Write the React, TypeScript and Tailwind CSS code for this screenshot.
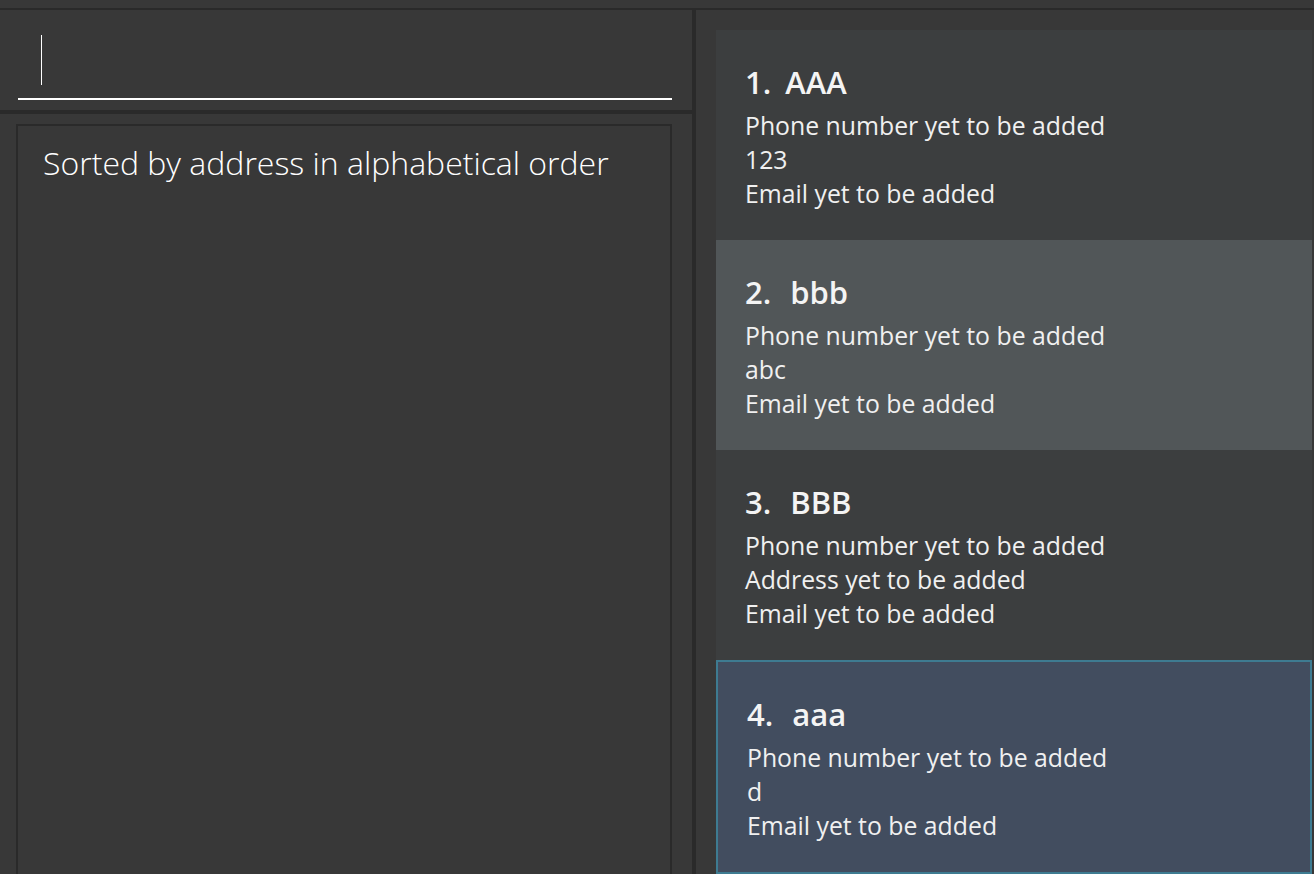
import React from "react";

type Person = { id: number; name: string; lines: string[]; bg: string; selected?: boolean };

const people: Person[] = [
  { id: 1, name: "AAA", lines: ["Phone number yet to be added", "123", "Email yet to be added"], bg: "bg-[#3c3e3f]" },
  { id: 2, name: "bbb", lines: ["Phone number yet to be added", "abc", "Email yet to be added"], bg: "bg-[#515658]" },
  { id: 3, name: "BBB", lines: ["Phone number yet to be added", "Address yet to be added", "Email yet to be added"], bg: "bg-[#3c3e3f]" },
  { id: 4, name: "aaa", lines: ["Phone number yet to be added", "d", "Email yet to be added"], bg: "bg-[#424d5f]", selected: true },
];

function Card({ p }: { p: Person }) {
  return (
    <div
      className={`shrink-0 ${p.bg} pl-[29px] pt-[33px] ${
        p.selected ? "h-[214px] border-2 border-[#3e7b91]" : "h-[210px]"
      }`}
    >
      <div className="flex items-baseline text-[31px] leading-[38px] font-semibold text-[#f4f4f4]">
        <span>{p.id}.</span>
        <span className={p.id === 1 ? "ml-[14px]" : "ml-[19px]"}>{p.name}</span>
      </div>
      <div className="mt-[7px] text-[24.8px] leading-[34px] text-[#f0f0f0]">
        {p.lines.map((l, i) => (
          <div key={i}>{l}</div>
        ))}
      </div>
    </div>
  );
}

export default function App() {
  return (
    <div
      className="w-[1314px] h-[874px] overflow-hidden bg-[#383838] flex flex-col"
      style={{ fontFamily: '"Open Sans", "Noto Sans", sans-serif' }}
    >
      <div className="h-[8px] shrink-0" />
      <div className="h-[2px] shrink-0 bg-[#2a2a2a]" />
      <div className="flex flex-1 min-h-0">
        <div className="w-[692px] shrink-0 flex flex-col">
          <div className="h-[100px] shrink-0 pl-[18px] pr-[20px] pb-[10px] flex flex-col">
            <div className="flex-1 border-b-2 border-white pt-[25px] pl-[23px]">
              <div className="w-px h-[50px] bg-white" />
            </div>
          </div>
          <div className="h-[4px] shrink-0 bg-[#2a2a2a]" />
          <div className="flex-1 min-h-0 pt-[10px] pl-[16px] pr-[20px]">
            <div className="h-[calc(100%+10px)] border-2 border-[#2a2a2a] pl-[25px] pt-[15px]">
              <div className="text-[32px] leading-[44px] font-light text-white">
                Sorted by address in alphabetical order
              </div>
            </div>
          </div>
        </div>
        <div className="w-[4px] shrink-0 bg-[#2a2a2a]" />
        <div className="flex-1 min-w-0 pt-[20px] pl-[20px] pr-[2px] flex flex-col">
          {people.map((p) => (
            <Card key={p.id} p={p} />
          ))}
        </div>
      </div>
    </div>
  );
}
